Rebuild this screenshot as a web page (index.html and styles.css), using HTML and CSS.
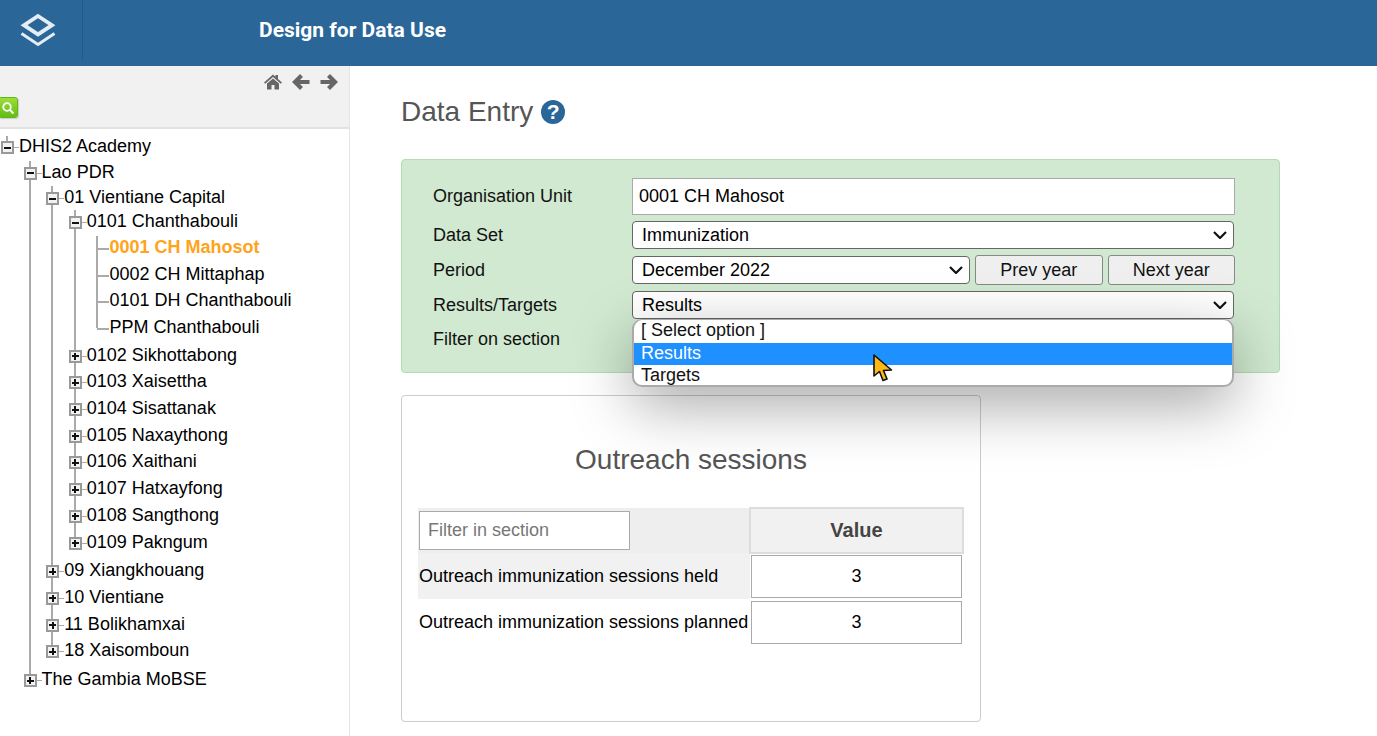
FILE: index.html
```html
<!DOCTYPE html>
<html lang="en">
<head>
  <meta charset="UTF-8" />
  <title>Data Entry</title>
  <link rel="stylesheet" href="styles.css">
</head>
<body>

<header class="top-bar">
  <div class="logo-box">
    <svg class="logo" viewBox="0 0 38 34" xmlns="http://www.w3.org/2000/svg">
      <path d="M19 3 L33 12.2 L19 21.4 L5 12.2 Z" fill="none" stroke="#e4edf4" stroke-width="3.8"/>
      <path d="M2.5 20.5 L19 31.5 L35.5 20.5" fill="none" stroke="#e4edf4" stroke-width="3"/>
    </svg>
  </div>
  <div class="app-title">Design for Data Use</div>
</header>

<div class="layout">
  <aside class="sidebar">
    <div class="side-tools">
      <div class="nav-icons">
        <svg class="nav-icon" viewBox="0 0 18 16"><path d="M9 0.5 L11.5 2.8 V1 H14 V5 L18 8.6 L16.8 9.8 L9 3 L1.2 9.8 L0 8.6 Z M3 9.5 L9 4.5 L15 9.5 V15.5 H10.5 V11 H7.5 V15.5 H3 Z" fill="#666"/></svg>
        <svg class="nav-icon" viewBox="0 0 18 16"><path d="M9.5 1.5 L3 8 L9.5 14.5 M4 8 H17.5" fill="none" stroke="#666" stroke-width="4.2"/></svg>
        <svg class="nav-icon" viewBox="0 0 18 16"><path d="M8.5 1.5 L15 8 L8.5 14.5 M14 8 H0.5" fill="none" stroke="#666" stroke-width="4.2"/></svg>
      </div>
      <button class="search-btn" title="Search">
        <svg viewBox="0 0 14 14" class="search-icon"><circle cx="6" cy="6" r="3.8" fill="none" stroke="#fff" stroke-width="1.8"/><path d="M8.8 8.8 L12.5 12.5" stroke="#fff" stroke-width="2"/></svg>
      </button>
    </div>

    <ul class="tree root">
      <li class="open"><span class="toggle"></span><span class="name">DHIS2 Academy</span>
        <ul class="level-1">
          <li class="open"><span class="toggle"></span><span class="name">Lao PDR</span>
            <ul class="level-2">
              <li class="open"><span class="toggle"></span><span class="name">01 Vientiane Capital</span>
                <ul class="level-3">
                  <li class="open"><span class="toggle"></span><span class="name">0101 Chanthabouli</span>
                    <ul class="leaves">
                      <li class="leaf"><span class="name selected">0001 CH Mahosot</span></li>
                      <li class="leaf"><span class="name">0002 CH Mittaphap</span></li>
                      <li class="leaf"><span class="name">0101 DH Chanthabouli</span></li>
                      <li class="leaf"><span class="name">PPM Chanthabouli</span></li>
                    </ul>
                  </li>
                  <li><span class="toggle"></span><span class="name">0102 Sikhottabong</span></li>
                  <li><span class="toggle"></span><span class="name">0103 Xaisettha</span></li>
                  <li><span class="toggle"></span><span class="name">0104 Sisattanak</span></li>
                  <li><span class="toggle"></span><span class="name">0105 Naxaythong</span></li>
                  <li><span class="toggle"></span><span class="name">0106 Xaithani</span></li>
                  <li><span class="toggle"></span><span class="name">0107 Hatxayfong</span></li>
                  <li><span class="toggle"></span><span class="name">0108 Sangthong</span></li>
                  <li><span class="toggle"></span><span class="name">0109 Pakngum</span></li>
                </ul>
              </li>
              <li><span class="toggle"></span><span class="name">09 Xiangkhouang</span></li>
              <li><span class="toggle"></span><span class="name">10 Vientiane</span></li>
              <li><span class="toggle"></span><span class="name">11 Bolikhamxai</span></li>
              <li><span class="toggle"></span><span class="name">18 Xaisomboun</span></li>
            </ul>
          </li>
          <li><span class="toggle"></span><span class="name">The Gambia MoBSE</span></li>
        </ul>
      </li>
    </ul>
  </aside>

  <main class="content">
    <h2 class="page-title">Data Entry <span class="help">?</span></h2>

    <div class="selection-box">
      <div class="form-row">
        <label>Organisation Unit</label>
        <input class="field org-field" type="text" value="0001 CH Mahosot" readonly>
      </div>
      <div class="form-row">
        <label>Data Set</label>
        <div class="pick-wrap">
          <select class="field pick"><option>Immunization</option></select>
          <svg class="chev" viewBox="0 0 14 8"><path d="M1 1 L7 7 L13 1" fill="none" stroke="#111" stroke-width="2.2"/></svg>
        </div>
      </div>
      <div class="form-row">
        <label>Period</label>
        <div class="pick-wrap period">
          <select class="field pick"><option>December 2022</option></select>
          <svg class="chev" viewBox="0 0 14 8"><path d="M1 1 L7 7 L13 1" fill="none" stroke="#111" stroke-width="2.2"/></svg>
        </div>
        <button class="year-btn">Prev year</button>
        <button class="year-btn">Next year</button>
      </div>
      <div class="form-row">
        <label>Results/Targets</label>
        <div class="pick-wrap">
          <select class="field pick"><option>Results</option></select>
          <svg class="chev" viewBox="0 0 14 8"><path d="M1 1 L7 7 L13 1" fill="none" stroke="#111" stroke-width="2.2"/></svg>
        </div>
        <div class="dropdown">
          <div class="opt">[ Select option ]</div>
          <div class="opt active">Results</div>
          <div class="opt">Targets</div>
          <svg class="cursor" viewBox="0 0 20 29"><path d="M1 1 L1 22 L6.5 17.5 L10 26.5 L14 25 L10.5 16.5 L18.5 16 Z" fill="#fdb813" stroke="#111" stroke-width="1.6" stroke-linejoin="round"/></svg>
        </div>
      </div>
      <div class="form-row">
        <label>Filter on section</label>
        <div class="pick-wrap">
          <select class="field pick"><option></option></select>
        </div>
      </div>
    </div>

    <section class="section-card">
      <h3 class="section-title">Outreach sessions</h3>
      <table class="section-table">
        <tr class="head">
          <td class="filter-cell"><input class="filter" type="text" placeholder="Filter in section"></td>
          <th>Value</th>
        </tr>
        <tr class="shade">
          <td>Outreach immunization sessions held</td>
          <td class="val"><input class="entry" type="text" value="3"></td>
        </tr>
        <tr>
          <td>Outreach immunization sessions planned</td>
          <td class="val"><input class="entry" type="text" value="3"></td>
        </tr>
      </table>
    </section>
  </main>
</div>

</body>
</html>
```

FILE: styles.css
```css
html, body {
  height: 100%;
}
body {
  margin: 0;
  overflow: hidden;
  background: #fff;
  color: #000;
  font-family: "Liberation Sans", Arial, sans-serif;
  font-size: 18px;
}
.top-bar {
  height: 66px;
  background-color: #2a6698;
  display: flex;
  align-items: flex-start;
}
.logo-box {
  width: 82px;
  height: 60px;
  border-right: 1px solid #245a87;
  display: flex;
  align-items: center;
  justify-content: center;
}
.logo {
  width: 38px;
  height: 34px;
  margin: 0 6px 1px 0;
}
.app-title {
  margin-left: 176px;
  line-height: 60px;
  font-family: Roboto, sans-serif;
  font-weight: 700;
  font-size: 21px;
  color: #fff;
}
.layout {
  display: flex;
  height: 670px;
}
.sidebar {
  width: 349px;
  flex-shrink: 0;
  border-right: 1px solid #e5e5e5;
}
.side-tools {
  height: 61px;
  background: #f1f1f1;
  border-bottom: 2px solid #e2e2e2;
  position: relative;
}
.nav-icons {
  display: flex;
  justify-content: flex-end;
  gap: 10px;
  padding: 8px 11px 0 0;
}
.nav-icon {
  width: 18px;
  height: 16px;
}
.search-btn {
  position: absolute;
  left: -2px;
  top: 31px;
  width: 20px;
  height: 21px;
  padding: 0;
  border: 1px solid #62b814;
  border-radius: 3px;
  background: linear-gradient(#9bde3a, #62bd12);
  box-shadow: 1px 1px 1px #ccc;
  display: flex;
  align-items: center;
  justify-content: center;
}
.search-icon {
  width: 14px;
  height: 14px;
}

/* tree */
.tree, .tree ul {
  list-style: none;
  margin: 0;
  padding: 0;
}
.tree ul {
  padding-left: 10.6px;
}
.root {
  padding: 4px 0 0 7px;
}
.tree li {
  position: relative;
  padding-left: 12px;
  line-height: 26.7px;
  white-space: nowrap;
}
.tree ul > li::before {
  content: "";
  position: absolute;
  left: -1px;
  top: -4px;
  bottom: 0;
  width: 2px;
  background: #aaa;
}
.tree ul > li:first-child::before {
  top: 2px;
}
.tree ul > li:last-child::before {
  bottom: auto;
  height: 18px;
}
.tree .level-1 {
  margin-top: -1px;
}
.tree .level-2 {
  margin-top: -1px;
  margin-bottom: 2px;
}
.tree .level-3 {
  margin-top: -3px;
  margin-bottom: 2px;
}
.tree .leaves {
  margin-top: -1px;
  margin-bottom: 1px;
}
.toggle {
  position: absolute;
  left: -6px;
  top: 8px;
  width: 13px;
  height: 13px;
  border: 2px solid #999;
  box-sizing: border-box;
  background: linear-gradient(#111, #111) center / 7px 2px no-repeat,
    linear-gradient(#111, #111) center / 2px 7px no-repeat,
    #f2f2f2;
  z-index: 1;
}
.open > .toggle {
  background: linear-gradient(#111, #111) center / 7px 2px no-repeat, #f2f2f2;
}
.toggle::after {
  content: "";
  position: absolute;
  left: 11px;
  top: 4px;
  width: 5px;
  height: 1px;
  background: #aaa;
}
.root > li > .toggle::before {
  content: "";
  position: absolute;
  left: 3px;
  top: -7px;
  width: 2px;
  height: 5px;
  background: #aaa;
}
.leaf::after {
  content: "";
  position: absolute;
  left: 0;
  top: 14px;
  width: 12px;
  height: 2px;
  background: #aaa;
}
.selected {
  color: #ffa31a;
  font-weight: 700;
}

/* main */
.content {
  flex: 1;
  padding-left: 51px;
}
.page-title {
  margin: 27px 0 28px;
  font-weight: 400;
  font-size: 28px;
  line-height: 38px;
  color: #555;
  display: flex;
  align-items: center;
  gap: 8px;
}
.help {
  width: 24px;
  height: 24px;
  border-radius: 50%;
  background: #2a6698;
  color: #fff;
  font-weight: 700;
  font-size: 21px;
  line-height: 24px;
  text-align: center;
}
.selection-box {
  width: 802px;
  height: 194px;
  background: #d0e9d0;
  border: 1px solid #b5dbb5;
  border-radius: 4px;
  padding: 18px 44px 0 31px;
  display: flex;
  flex-direction: column;
  gap: 6px;
}
.form-row {
  display: flex;
  align-items: center;
  gap: 5px;
  position: relative;
}
.form-row label {
  width: 194px;
  flex-shrink: 0;
  color: #111;
}
.field {
  font-family: "Liberation Sans", Arial, sans-serif;
  font-size: 18px;
  color: #000;
  background: #fff;
  box-sizing: border-box;
}
.org-field {
  flex: 1;
  height: 37px;
  padding: 0 6px;
  border: 1px solid #aaa;
  border-radius: 0;
  outline: none;
}
.pick-wrap {
  position: relative;
  width: 602px;
  height: 28px;
}
.pick-wrap.period {
  width: 338px;
}
.pick {
  display: block;
  width: 100%;
  height: 28px;
  appearance: none;
  border: 1px solid #666;
  border-radius: 4px;
  padding: 0 24px 0 9px;
}
.chev {
  position: absolute;
  right: 7px;
  top: 10px;
  width: 14px;
  height: 8px;
  pointer-events: none;
}
.year-btn {
  height: 30px;
  flex: 1;
  font-family: "Liberation Sans", Arial, sans-serif;
  font-size: 18px;
  color: #111;
  background: #efefef;
  border: 1px solid #888;
  border-radius: 3px;
  padding: 0;
}
.dropdown {
  position: absolute;
  left: 199px;
  top: 28px;
  width: 602px;
  height: 68px;
  box-sizing: border-box;
  background: #fff;
  border: 2px solid #aaa;
  border-top-width: 1px;
  border-radius: 10px;
  box-shadow: 0 18px 60px rgba(0, 0, 0, 0.35);
  z-index: 5;
  display: flex;
  flex-direction: column;
}
.opt {
  height: 22px;
  flex-shrink: 0;
  line-height: 21px;
  padding-left: 7px;
  color: #111;
}
.opt:first-child {
  height: 23px;
}
.opt:nth-child(3) {
  height: 21px;
}
.opt.active {
  background: #1e90ff;
  color: #fff;
}
.cursor {
  position: absolute;
  left: 239px;
  top: 34px;
  width: 20px;
  height: 29px;
}

/* section */
.section-card {
  margin-top: 22px;
  width: 578px;
  height: 325px;
  border: 1px solid #ccc;
  border-radius: 4px;
}
.section-title {
  margin: 44px 0 27px;
  height: 40px;
  text-align: center;
  font-weight: 400;
  font-size: 28px;
  line-height: 40px;
  color: #555;
}
.section-table {
  border-collapse: collapse;
  width: 546px;
  margin-left: 16px;
  font-size: 18px;
}
.section-table td, .section-table th {
  padding: 0;
  height: 46px;
  box-sizing: border-box;
}
.section-table .head td, .section-table .head th {
  height: 45px;
}
.filter-cell {
  background: #eee;
  width: 332px;
}
.filter {
  display: block;
  width: 211px;
  height: 39px;
  box-sizing: border-box;
  border: 1px solid #aaa;
  padding: 0 8px;
  font-family: "Liberation Sans", Arial, sans-serif;
  font-size: 18px;
}
.filter::placeholder {
  color: #777;
}
.section-table th {
  background: #f1f1f1;
  border: 2px solid #ddd;
  color: #444;
  font-size: 20px;
  font-weight: 700;
}
.shade td:first-child {
  background: #f1f1f1;
}
.section-table tr td:first-child {
  padding-left: 1px;
  white-space: nowrap;
}
.val {
  text-align: center;
}
.entry {
  display: block;
  width: 211px;
  height: 43px;
  margin: 0 auto;
  box-sizing: border-box;
  border: 1px solid #aaa;
  text-align: center;
  font-family: "Liberation Sans", Arial, sans-serif;
  font-size: 18px;
}
```
